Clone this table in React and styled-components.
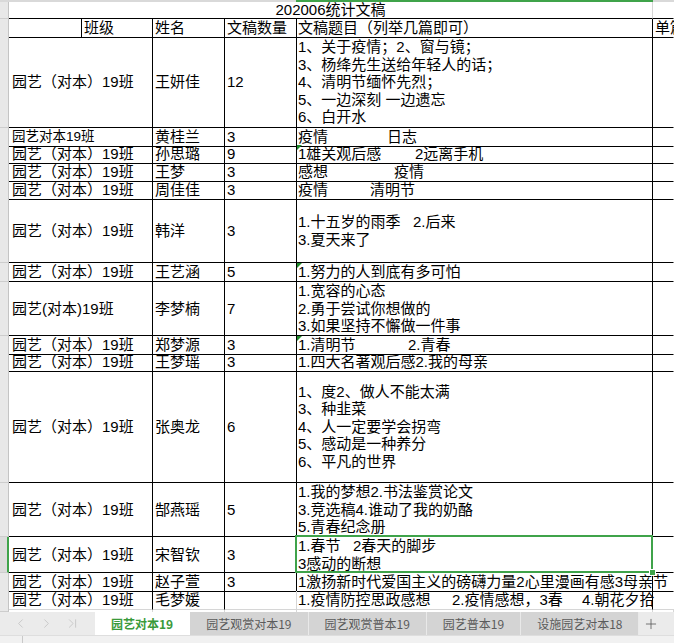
import React from 'react';
import styled, { createGlobalStyle } from 'styled-components';
import { ChevronLeft, ChevronRight, ChevronLast, Plus } from 'lucide-react';

const GlobalStyle = createGlobalStyle`
  html, body {
    margin: 0;
    padding: 0;
    background: #fff;
  }
  body {
    font-family: "Liberation Sans", "Noto Sans CJK SC", sans-serif;
    color: #000;
  }
`;

const GREEN = '#3fa34a';
const COLS = '9px 73px 71px 72px 72px 356px minmax(0, 1fr)';

// 线条颜色：black = 表格边框，grid = 浅灰网格线
const edge = (v) => (v === 'grid' ? '#d6d6d6' : v === 'none' ? 'transparent' : '#000');

// 文稿题目：每行是若干片段，w 表示片段占的宽度（模拟原表里的空格对齐）
const ROWS = [
  {
    h: 91, cls: '园艺（对本）19班', name: '王妍佳', count: '12',
    lines: [
      [{ t: '1、关于疫情；2、窗与镜；' }],
      [{ t: '3、杨绛先生送给年轻人的话；' }],
      [{ t: '4、清明节缅怀先烈；' }],
      [{ t: '5、一边深刻 一边遗忘' }],
      [{ t: '6、白开水' }],
    ],
  },
  { h: 17, cls: '园艺对本19班', clsSize: 13.5, name: '黄桂兰', count: '3', lines: [[{ t: '疫情', w: 89 }, { t: '日志' }]] },
  { h: 18, cls: '园艺（对本）19班', name: '孙思璐', count: '9', mark: true, lines: [[{ t: '1雄关观后感', w: 117 }, { t: '2远离手机' }]] },
  { h: 18, cls: '园艺（对本）19班', name: '王梦', count: '3', lines: [[{ t: '感想', w: 96 }, { t: '疫情' }]] },
  { h: 18, cls: '园艺（对本）19班', name: '周佳佳', count: '3', lines: [[{ t: '疫情', w: 72 }, { t: '清明节' }]] },
  {
    h: 64, cls: '园艺（对本）19班', name: '韩洋', count: '3',
    lines: [[{ t: '1.十五岁的雨季', w: 115 }, { t: '2.后来' }], [{ t: '3.夏天来了' }]],
  },
  { h: 19, cls: '园艺（对本）19班', name: '王艺涵', count: '5', mark: true, lines: [[{ t: '1.努力的人到底有多可怕' }]] },
  {
    h: 54, cls: '园艺(对本)19班', name: '李梦楠', count: '7',
    lines: [[{ t: '1.宽容的心态' }], [{ t: '2.勇于尝试你想做的' }], [{ t: '3.如果坚持不懈做一件事' }]],
  },
  { h: 17, cls: '园艺（对本）19班', name: '郑梦源', count: '3', mark: true, lines: [[{ t: '1.清明节', w: 110 }, { t: '2.青春' }]] },
  { h: 18, cls: '园艺（对本）19班', name: '王梦瑶', count: '3', lines: [[{ t: '1.四大名著观后感2.我的母亲' }]] },
  {
    h: 112, cls: '园艺（对本）19班', name: '张奥龙', count: '6',
    lines: [
      [{ t: '1、度2、做人不能太满' }],
      [{ t: '3、种韭菜' }],
      [{ t: '4、人一定要学会拐弯' }],
      [{ t: '5、感动是一种养分' }],
      [{ t: '6、平凡的世界' }],
    ],
  },
  {
    h: 54, cls: '园艺（对本）19班', name: '郜燕瑶', count: '5',
    lines: [[{ t: '1.我的梦想2.书法鉴赏论文' }], [{ t: '3.竞选稿4.谁动了我的奶酪' }], [{ t: '5.青春纪念册' }]],
  },
  {
    h: 36, cls: '园艺（对本）19班', name: '宋智钦', count: '3', selected: true,
    lines: [[{ t: '1.春节', w: 55 }, { t: '2春天的脚步' }], [{ t: '3感动的断想' }]],
  },
  { h: 18, cls: '园艺（对本）19班', name: '赵子萱', count: '3', lines: [[{ t: '1激扬新时代爱国主义的磅礴力量2心里漫画有感3母亲节' }]] },
  {
    h: 18, cls: '园艺（对本）19班', name: '毛梦媛', count: '', last: true,
    lines: [[{ t: '1.疫情防控思政感想', w: 154 }, { t: '2.疫情感想，3春', w: 130 }, { t: '4.朝花夕拾' }]],
  },
];

const TABS = ['园艺对本19', '园艺观赏对本19', '园艺观赏普本19', '园艺普本19', '设施园艺对本18'];

const App = () => (
  <Page>
    <GlobalStyle />
    <Sheet>
      <HeaderEdge>
        <EdgePart $w={296} />
        <EdgePart $w={357} $active />
        <EdgePart />
      </HeaderEdge>

      {/* 标题行（合并居中） */}
      <Row $h={17}>
        <RowHead />
        <TitleCell>202006统计文稿</TitleCell>
        <Cell $right="none" />
      </Row>

      {/* 表头 */}
      <Row $h={18}>
        <RowHead />
        <Cell />
        <Cell>班级</Cell>
        <Cell>姓名</Cell>
        <Cell>文稿数量</Cell>
        <Cell $pad={1}>文稿题目（列举几篇即可）</Cell>
        <Cell $right="none">单篇字数</Cell>
      </Row>

      {ROWS.map((r) => (
        <Row key={r.name} $h={r.h}>
          <RowHead $selected={r.selected} />
          <Cell $span={2} $pad={3} $size={r.clsSize} $bottom={r.last && 'grid'}>{r.cls}</Cell>
          <Cell $bottom={r.last && 'grid'}>{r.name}</Cell>
          <Cell $pad={2} $bottom={r.last && 'grid'} $right={r.last && 'grid'}>{r.count}</Cell>
          <Cell $pad={1} $bottom={r.last && 'grid'}>
            {r.mark && <Marker />}
            {r.lines.map((line, i) => (
              <Line key={i}>
                {line.map((seg, j) => (
                  <Piece key={j} $w={seg.w}>{seg.t}</Piece>
                ))}
              </Line>
            ))}
            {r.selected && (
              <Selection>
                <Handle />
              </Selection>
            )}
          </Cell>
          <Cell $right="none" $bottom={r.last && 'grid'} />
        </Row>
      ))}

      <Filler>
        <RowHead />
        <GridCell $span={2} />
        <GridCell />
        <GridCell />
        <GridCell />
        <GridCell />
      </Filler>
    </Sheet>

    <TabBar>
      <NavArea>
        <NavButton><ChevronLeft size={15} strokeWidth={1.3} /></NavButton>
        <NavButton><ChevronRight size={15} strokeWidth={1.3} /></NavButton>
        <NavButton><ChevronLast size={15} strokeWidth={1.3} /></NavButton>
      </NavArea>
      {TABS.map((t, i) => (
        <Tab key={t} $active={i === 0}>{t}</Tab>
      ))}
      <AddTab><Plus size={16} strokeWidth={1.2} /></AddTab>
    </TabBar>
    <StatusBar>
      <StatusDivider />
    </StatusBar>
  </Page>
);

const Page = styled.div`
  width: 674px;
  height: 643px;
  overflow: hidden;
  display: flex;
  flex-direction: column;
`;

const Sheet = styled.div`
  flex: 1;
  display: flex;
  flex-direction: column;
  overflow: hidden;
  background: #fff;
`;

const HeaderEdge = styled.div`
  display: flex;
  height: 2px;
  flex-shrink: 0;
`;

const EdgePart = styled.div`
  ${(p) => (p.$w ? `width: ${p.$w}px;` : 'flex: 1;')}
  background: ${(p) => (p.$active ? GREEN : '#d9d9d9')};
`;

const Row = styled.div`
  display: grid;
  grid-template-columns: ${COLS};
  height: ${(p) => p.$h}px;
  flex-shrink: 0;
`;

const Filler = styled(Row)`
  flex: 1;
`;

const RowHead = styled.div`
  background: ${(p) => (p.$selected ? '#dcdcdc' : '#e8e8e8')};
  border-bottom: 1px solid #cdcdcd;
  border-right: ${(p) => (p.$selected ? `2px solid ${GREEN}` : '1px solid #c4c4c4')};
`;

const Cell = styled.div`
  grid-column: span ${(p) => p.$span || 1};
  position: relative;
  display: flex;
  flex-direction: column;
  justify-content: center;
  min-width: 0;
  padding-left: ${(p) => p.$pad ?? 2}px;
  border-right: 1px solid ${(p) => edge(p.$right)};
  border-bottom: 1px solid ${(p) => edge(p.$bottom)};
  font-size: ${(p) => p.$size || 15}px;
  line-height: 17.5px;
  white-space: nowrap;
`;

const TitleCell = styled.div`
  grid-column: span 5;
  display: flex;
  align-items: center;
  justify-content: center;
  border-right: 1px solid #d6d6d6;
  border-bottom: 1px solid #000;
  font-size: 15px;
  line-height: 16px;
  white-space: nowrap;
`;

const GridCell = styled.div`
  grid-column: span ${(p) => p.$span || 1};
  border-right: 1px solid #d6d6d6;
`;

const Line = styled.div`
  display: flex;
`;

const Piece = styled.span`
  ${(p) => p.$w && `min-width: ${p.$w}px;`}
`;

const Marker = styled.span`
  position: absolute;
  top: 0;
  left: 0;
  width: 0;
  height: 0;
  border-top: 5px solid #1f8a2a;
  border-right: 5px solid transparent;
`;

const Selection = styled.div`
  position: absolute;
  left: -2px;
  top: -2px;
  right: -1px;
  bottom: -1px;
  border: 2px solid ${GREEN};
  pointer-events: none;
  z-index: 2;
`;

const Handle = styled.div`
  position: absolute;
  right: -5px;
  bottom: -5px;
  width: 5px;
  height: 5px;
  background: ${GREEN};
  border: 1px solid #fff;
`;

const TabBar = styled.div`
  display: flex;
  height: 23px;
  flex-shrink: 0;
  background: #ebebeb;
  font-family: "Noto Sans CJK SC", sans-serif;
  font-size: 12px;
`;

const NavArea = styled.div`
  width: 95px;
  display: flex;
  align-items: center;
  padding-left: 7px;
  box-sizing: border-box;
`;

const NavButton = styled.div`
  width: 26px;
  display: flex;
  justify-content: center;
  color: #c2c2c2;
`;

const Tab = styled.div`
  display: flex;
  align-items: center;
  padding: 0 16px;
  border-right: 1px solid ${(p) => (p.$active ? '#fff' : '#e9e9e9')};
  background: ${(p) => (p.$active ? '#fff' : '#d4d4d4')};
  color: ${(p) => (p.$active ? '#3a9a3a' : '#5b5b5b')};
  font-weight: ${(p) => (p.$active ? 700 : 400)};
  white-space: nowrap;
`;

const AddTab = styled.div`
  flex: 1;
  display: flex;
  align-items: center;
  padding-left: 4px;
  color: #555;
`;

const StatusBar = styled.div`
  height: 8px;
  flex-shrink: 0;
  background: #f1f1f1;
  border-top: 1px solid #dedede;
  box-sizing: border-box;
  display: flex;
`;

const StatusDivider = styled.div`
  margin-left: 22px;
  width: 1px;
  background: #c9c9c9;
`;

export default App;
